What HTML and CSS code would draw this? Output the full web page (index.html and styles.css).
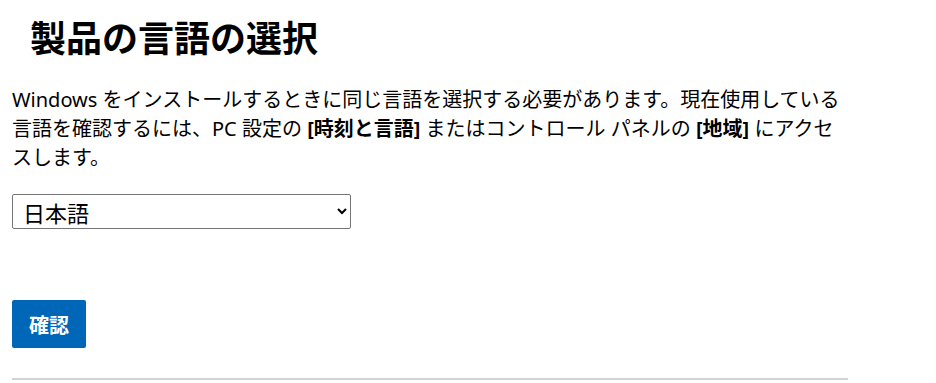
FILE: index.html
```html
<!DOCTYPE html>
<html lang="ja">
<head>
  <meta charset="UTF-8">
  <title>製品の言語の選択</title>
  <link rel="stylesheet" href="styles.css">
</head>
<body>
  <div class="container">
      <h1 class="title">製品の言語の選択</h1>
      <p class="intro">Windows をインストールするときに同じ言語を選択する必要があります。現在使用している言語を確認するには、PC 設定の <b>[時刻と言語]</b> またはコントロール パネルの <b>[地域]</b> にアクセスします。</p>
      <select class="lang-select">
          <option>日本語</option>
          <option>English</option>
      </select>
      <div class="actions">
          <button class="confirm-btn">確認</button>
      </div>
      <hr class="divider">
  </div>
</body>
</html>
```

FILE: styles.css
```css
body {
    margin: 0;
    background: #fff;
    color: #000;
    font-family: "Noto Sans", "Noto Sans CJK JP", sans-serif;
}
.container {
    width: 836px;
    padding: 0 12px;
}
.title {
    font-size: 36px;
    font-weight: bold;
    line-height: 48px;
    margin: 15px 0 0 18px;
}
.intro {
    font-size: 20px;
    line-height: 29px;
    margin: 22px 0 0;
}
.intro b {
    font-weight: bold;
}
.lang-select {
    display: block;
    margin-top: 22px;
    width: 339px;
    height: 35px;
    font-family: "Noto Sans CJK JP", sans-serif;
    font-size: 22px;
    padding: 0 6px;
    border: 1px solid #767676;
    border-radius: 2px;
    background: #fff;
    color: #000;
}
.actions {
    margin-top: 71px;
}
.confirm-btn {
    background: #0067b8;
    color: #fff;
    border: none;
    border-radius: 2px;
    width: 74px;
    height: 48px;
    font-family: "Noto Sans CJK JP", sans-serif;
    font-size: 20px;
    font-weight: bold;
    padding: 0;
}
.divider {
    border: none;
    border-top: 2px solid #d2d2d2;
    margin: 30px 0 0;
}
```
